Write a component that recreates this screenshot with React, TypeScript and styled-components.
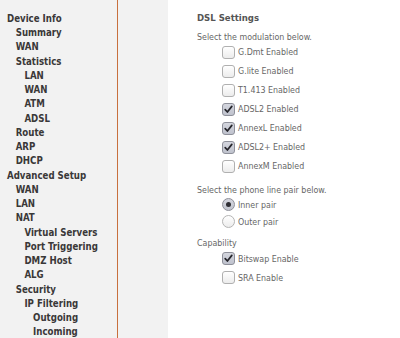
import React from "react";
import styled, { createGlobalStyle } from "styled-components";

const Global = createGlobalStyle`
  html, body { margin: 0; padding: 0; background: #ffffff; }
  body { width: 400px; height: 338px; overflow: hidden; }
`;

const Page = styled.div`
  display: flex;
  width: 400px;
  height: 338px;
  background: #f2f2f2;
  font-family: "DejaVu Sans Condensed", "DejaVu Sans", sans-serif;
  font-stretch: condensed;
`;

const Sidebar = styled.nav`
  width: 118px;
  flex: none;
  border-right: 1px solid #c8703e;
  padding-top: 11.8px;
  box-sizing: border-box;
`;

const NavItem = styled.div<{ $level: number }>`
  font-weight: bold;
  font-size: 9.6px;
  line-height: 14.25px;
  height: 14.25px;
  color: #3a3838;
  padding-left: ${(p) => 7 + p.$level * 8.7}px;
  white-space: nowrap;
`;

const Gutter = styled.div`
  width: 50px;
  flex: none;
`;

const Content = styled.main`
  flex: 1;
  background: #ffffff;
  padding: 11.5px 0 0 29px;
  box-sizing: border-box;
  color: #666666;
  font-size: 8.8px;
`;

const Title = styled.div`
  font-weight: bold;
  font-size: 9.5px;
  line-height: 12px;
  color: #555555;
  margin-bottom: 7px;
`;

const Prompt = styled.div<{ $gap?: number }>`
  line-height: 12px;
  margin-top: ${(p) => p.$gap ?? 0}px;
`;

const OptionList = styled.div`
  display: flex;
  flex-direction: column;
  padding-left: 25px;
`;

const OptionRow = styled.label<{ $h: number }>`
  display: flex;
  align-items: center;
  height: ${(p) => p.$h}px;
  gap: 3px;
`;

const Box = styled.span<{ $on: boolean }>`
  width: 13px;
  height: 13px;
  box-sizing: border-box;
  border: 1px solid ${(p) => (p.$on ? "#8e909a" : "#b0b0b0")};
  border-radius: 3px;
  background: ${(p) =>
    p.$on
      ? "linear-gradient(#d4d6de, #bfc2cd)"
      : "linear-gradient(#ffffff, #ececec)"};
  display: flex;
  align-items: center;
  justify-content: center;
  flex: none;
`;

const Round = styled.span<{ $on: boolean }>`
  width: 13px;
  height: 13px;
  box-sizing: border-box;
  border: 1px solid ${(p) => (p.$on ? "#8e909a" : "#b4b4b4")};
  border-radius: 50%;
  background: ${(p) =>
    p.$on
      ? "linear-gradient(#d4d6de, #c2c5cf)"
      : "linear-gradient(#ffffff, #ececec)"};
  display: flex;
  align-items: center;
  justify-content: center;
  flex: none;
`;

const Dot = styled.span`
  width: 5px;
  height: 5px;
  border-radius: 50%;
  background: #2e2e34;
`;

const Label = styled.span`
  white-space: nowrap;
  line-height: 12px;
`;

const Check = () => (
  <svg width="9" height="9" viewBox="0 0 9 9">
    <path d="M1.2 4.6 L3.4 7 L7.8 1.4" fill="none" stroke="#26262c" strokeWidth="1.7" strokeLinecap="round" strokeLinejoin="round" />
  </svg>
);

const nav: [string, number][] = [
  ["Device Info", 0],
  ["Summary", 1],
  ["WAN", 1],
  ["Statistics", 1],
  ["LAN", 2],
  ["WAN", 2],
  ["ATM", 2],
  ["ADSL", 2],
  ["Route", 1],
  ["ARP", 1],
  ["DHCP", 1],
  ["Advanced Setup", 0],
  ["WAN", 1],
  ["LAN", 1],
  ["NAT", 1],
  ["Virtual Servers", 2],
  ["Port Triggering", 2],
  ["DMZ Host", 2],
  ["ALG", 2],
  ["Security", 1],
  ["IP Filtering", 2],
  ["Outgoing", 3],
  ["Incoming", 3],
];

const modulations: [string, boolean][] = [
  ["G.Dmt Enabled", false],
  ["G.lite Enabled", false],
  ["T1.413 Enabled", false],
  ["ADSL2 Enabled", true],
  ["AnnexL Enabled", true],
  ["ADSL2+ Enabled", true],
  ["AnnexM Enabled", false],
];

const CheckOption = ({ label, on }: { label: string; on: boolean }) => (
  <OptionRow $h={19}>
    <Box $on={on}>{on && <Check />}</Box>
    <Label>{label}</Label>
  </OptionRow>
);

const RadioOption = ({ label, on }: { label: string; on: boolean }) => (
  <OptionRow $h={17}>
    <Round $on={on}>{on && <Dot />}</Round>
    <Label>{label}</Label>
  </OptionRow>
);

export default function App() {
  return (
    <>
      <Global />
      <Page>
        <Sidebar>
          {nav.map(([t, l], i) => (
            <NavItem key={i} $level={l}>
              {t}
            </NavItem>
          ))}
        </Sidebar>
        <Gutter />
        <Content>
          <Title>DSL Settings</Title>
          <Prompt>Select the modulation below.</Prompt>
          <OptionList>
            {modulations.map(([t, on]) => (
              <CheckOption key={t} label={t} on={on} />
            ))}
          </OptionList>
          <Prompt $gap={8.5}>Select the phone line pair below.</Prompt>
          <OptionList>
            <RadioOption label="Inner pair" on={true} />
            <RadioOption label="Outer pair" on={false} />
          </OptionList>
          <Prompt $gap={7}>Capability</Prompt>
          <OptionList>
            <CheckOption label="Bitswap Enable" on={true} />
            <CheckOption label="SRA Enable" on={false} />
          </OptionList>
        </Content>
      </Page>
    </>
  );
}
